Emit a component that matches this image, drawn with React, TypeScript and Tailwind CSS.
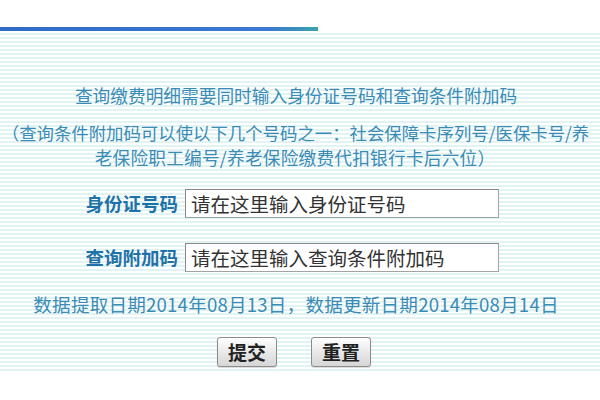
import React from "react";

const font = { fontFamily: '"Noto Sans CJK SC", "Noto Sans", sans-serif' };

function Row({ label, value }: { label: string; value: string }) {
  return (
    <div className="flex items-center pl-[82px]">
      <div className="w-[96px] text-right text-[18.5px] font-bold leading-[23px] text-[#1f72a8] whitespace-nowrap">{label}</div>
      <div className="ml-[7px] flex h-[29px] w-[314px] items-center border border-[#a3a3a3] border-t-[#8a8a8a] border-l-[#8a8a8a] bg-white pl-[5px] text-[19.5px] leading-none text-[#333] whitespace-nowrap">
        {value}
      </div>
    </div>
  );
}

function Btn({ children }: { children: React.ReactNode }) {
  return (
    <div className="flex h-[30px] w-[60px] items-center justify-center rounded-[3px] border border-[#8c8c8c] bg-[linear-gradient(to_bottom,#ffffff,#e9e9e9_50%,#d6d6d6)] text-[19px] font-bold text-[#222] shadow-[0_1px_1px_rgba(0,0,0,0.15)]">
      {children}
    </div>
  );
}

export default function App() {
  return (
    <div className="flex h-[400px] w-[600px] flex-col overflow-hidden bg-white" style={font}>
      <div className="h-[27px] shrink-0" />
      <div className="h-[4px] w-[318px] shrink-0 bg-[linear-gradient(to_right,#2f6cc2_0%,#3a7ad0_85%,#3aa3a8_100%)]" />
      <div className="flex h-[342px] shrink-0 flex-col items-center bg-[repeating-linear-gradient(to_bottom,#ffffff_0px,#ffffff_2px,#e2f3f4_2px,#e2f3f4_4px)] pt-[53px]">
        <div className="mr-[8px] text-[17.7px] leading-[23px] text-[#3a8cb6] whitespace-nowrap">查询缴费明细需要同时输入身份证号码和查询条件附加码</div>
        <div className="mt-[14px] ml-[-9px] text-[17.4px] leading-[23px] text-[#3a8cb6] whitespace-nowrap">（查询条件附加码可以使以下几个号码之一：社会保障卡序列号/医保卡号/养</div>
        <div className="mt-[2px] mr-[10px] text-[17.7px] leading-[23px] tracking-[0.2px] text-[#3a8cb6] whitespace-nowrap">老保险职工编号/养老保险缴费代扣银行卡后六位）</div>
        <div className="mt-[20px] flex w-full flex-col gap-[25px]">
          <Row label="身份证号码" value="请在这里输入身份证号码" />
          <Row label="查询附加码" value="请在这里输入查询条件附加码" />
        </div>
        <div className="mt-[20px] mr-[8px] text-[18.6px] leading-[23px] tracking-[0.2px] text-[#3a8cb6] whitespace-nowrap">数据提取日期2014年08月13日，数据更新日期2014年08月14日</div>
        <div className="mt-[22px] mr-[12px] flex gap-[34px]">
          <Btn>提交</Btn>
          <Btn>重置</Btn>
        </div>
      </div>
    </div>
  );
}
